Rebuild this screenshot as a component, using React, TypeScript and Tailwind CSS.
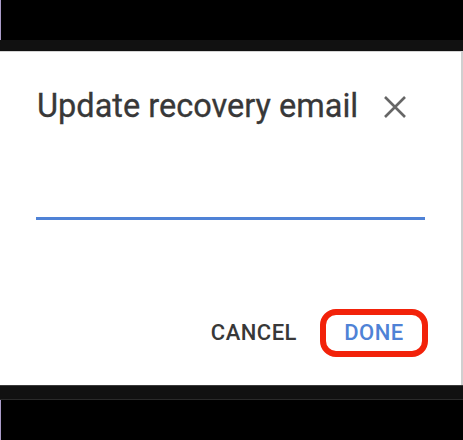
export default function App() {
  return (
    <div className="w-[463px] h-[440px] bg-black flex flex-col overflow-hidden" style={{ fontFamily: 'Roboto, "Liberation Sans", sans-serif' }}>
      {/* top bars */}
      <div className="h-[40px] bg-black border-l border-[#a99bc8] shrink-0" />
      <div className="h-[11px] bg-[#111111] shrink-0" />

      {/* dialog */}
      <div className="h-[334px] shrink-0 bg-white border-t border-[#d4d4d4] border-r-2 border-r-[#cfcfcf] flex flex-col">
        <div className="flex items-center justify-between pl-[37px] pr-[54px] pt-[38px]">
          <h1 className="text-[32.5px] leading-[32px] text-[#383838] font-normal [-webkit-text-stroke:0.3px_#383838]">Update recovery email</h1>
          <svg width="24" height="24" viewBox="0 0 24 24" className="mt-[1px]">
            <path d="M2 2 L22 22 M22 2 L2 22" stroke="#666666" strokeWidth="2.6" fill="none" />
          </svg>
        </div>

        <div className="mt-[95px] ml-[36px] mr-[36px] h-[3px] bg-[#4f82d6]" />

        <div className="mt-[89px] flex items-center justify-end pr-[33px] gap-[23px]">
          <button className="text-[22px] leading-[22px] font-medium text-[#383838] tracking-[0.5px]">CANCEL</button>
          <button className="h-[48px] w-[108px] border-[6px] border-[#f2220a] rounded-[16px] flex items-center justify-center text-[22px] leading-[22px] font-medium text-[#4f82d6] tracking-[0.5px]">
            DONE
          </button>
        </div>
      </div>

      {/* bottom bars */}
      <div className="h-[15px] bg-[#111111] border-t border-[#3a3a3a] border-b border-b-[#2a2a2a] shrink-0" />
      <div className="flex-1 bg-black border-l border-[#a99bc8]" />
    </div>
  );
}
